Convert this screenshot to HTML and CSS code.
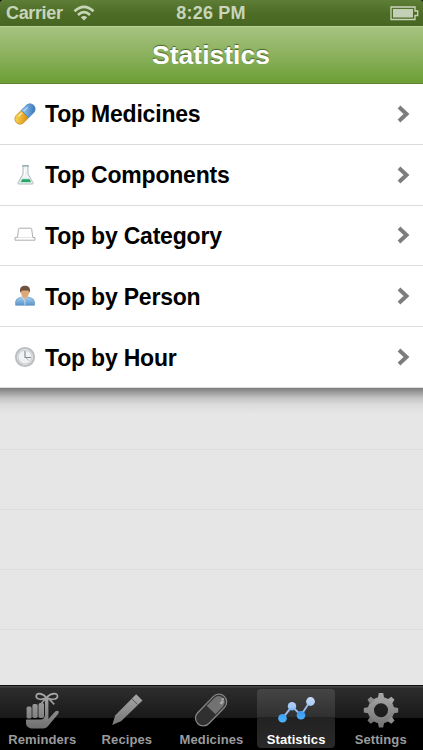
FILE: index.html
```html
<!DOCTYPE html>
<html lang="en">
<head>
<meta charset="utf-8">
<title>Statistics</title>
<link rel="stylesheet" href="styles.css">
</head>
<body>
<div class="app">
  <header class="status">
    <div class="carrier"><span>Carrier</span>
      <svg class="wifi" width="22" height="16" viewBox="0 0 22 16" fill="none" stroke="#c9d5bb" stroke-width="2.7"><path d="M1.5 6.2Q11-2.4 20.5 6.2M5 9.9Q11 4.4 17 9.9"/><path d="M7.8 12.3Q11 9.6 14.2 12.3L11 15.4Z" fill="#c9d5bb" stroke="none"/></svg>
    </div>
    <div class="time">8:26 PM</div>
    <svg class="battery" width="29" height="15" viewBox="0 0 29 15"><path d="M1 1h24v4h2.7v4.5H25v4H1z" fill="none" stroke="#c9d5bb" stroke-width="1.3"/><rect x="3" y="3" width="20" height="8.5" fill="#c3d0b5"/></svg>
  </header>
  <div class="nav"><h1>Statistics</h1></div>
  <main class="content">
    <ul class="list">
      <li class="row">
        <svg class="icon" viewBox="0 0 22 22"><defs><linearGradient id="blue" x2="1" y2="1"><stop stop-color="#9bc9f3"/><stop offset="1" stop-color="#286bb3"/></linearGradient><linearGradient id="gold" x2="1" y2="1"><stop stop-color="#ffe05a"/><stop offset="1" stop-color="#d88b10"/></linearGradient></defs><g transform="rotate(-45 11 11)"><path d="M11 5.8H4a5.2 5.2 0 0 0 0 10.4h7z" fill="url(#gold)" stroke="#c38b2a" stroke-width=".7"/><path d="M11 5.8h7a5.2 5.2 0 0 1 0 10.4h-7z" fill="url(#blue)" stroke="#4880b8" stroke-width=".7"/><path d="M4.5 8.1h5.5" stroke="#fff2a0" stroke-width="1.3"/><path d="M12 8.1h5.5" stroke="#b8dbf8" stroke-width="1.3"/></g></svg>
        <span class="label">Top Medicines</span><svg class="chevron" viewBox="0 0 13 18"><path d="M2 2l7.5 7L2 16"/></svg></li>
      <li class="row">
        <svg class="icon" viewBox="0 0 22 22"><path d="M9 2v8L4 18.7q-.6 1.3.8 1.3h13.4q1.4 0 .8-1.3L14 10V2z" fill="#f0f4f5" stroke="#a5b3ba" stroke-width=".9"/><path d="M8 1.8h7" stroke="#8599a3"/><path d="M7.5 14.5h8l2.5 4.3H5z" fill="#bfe7d2"/><path d="M8.2 15.3h7.4l1.3 2.6H7.1z" fill="#2ca36b"/><path d="M10.5 5v6" stroke="#fff"/></svg>
        <span class="label">Top Components</span><svg class="chevron" viewBox="0 0 13 18"><path d="M2 2l7.5 7L2 16"/></svg></li>
      <li class="row">
        <svg class="icon" viewBox="0 0 22 22"><path d="M4.6 5.2q0-1 1-1h11q1 0 1.1 1l1.1 8.3h2.2v2.7H1v-2.7h2.4z" fill="#fff" stroke="#a4a4a4" stroke-width=".9"/><path d="M3.5 13.5h15" stroke="#ddd" stroke-width=".7"/></svg>
        <span class="label">Top by Category</span><svg class="chevron" viewBox="0 0 13 18"><path d="M2 2l7.5 7L2 16"/></svg></li>
      <li class="row">
        <svg class="icon" viewBox="0 0 22 22"><defs><linearGradient id="shirt" x2="0" y2="1"><stop stop-color="#a8d0f1"/><stop offset="1" stop-color="#5794c9"/></linearGradient></defs><path d="M1.6 20.3v-3.5q.3-3 3.2-3.8L8 11.9h6l3.3 1.1q2.9.8 3.2 3.8v3.5z" fill="url(#shirt)" stroke="#6c9ac2" stroke-width=".7"/><path d="M8.3 11l2.7 4.2 2.7-4.2z" fill="#e8b782"/><path d="M7.5 12l3.3 3.6.2 4.5" fill="none" stroke="#d6eaf9" stroke-width=".8"/><ellipse cx="11" cy="7" rx="4.2" ry="5.2" fill="#dca878"/><path d="M6.3 7.8C5.2 2.8 7.2.7 11 .7s5.8 2.1 4.7 7.1L14.3 5.5H8z" fill="#70513b"/></svg>
        <span class="label">Top by Person</span><svg class="chevron" viewBox="0 0 13 18"><path d="M2 2l7.5 7L2 16"/></svg></li>
      <li class="row">
        <svg class="icon" viewBox="0 0 22 22"><circle cx="11" cy="11" r="9" fill="#f0f2f3" stroke="#bcbebf" stroke-width="2.2"/><circle cx="11" cy="11" r="6.9" fill="none" stroke="#ced2d4" stroke-width="1.2"/><path d="M11 5v6.5h6" fill="none" stroke="#7e868a" stroke-width="1.1"/><path d="M11 11l3.8 3.5" stroke="#a0a4a6" stroke-width=".8"/></svg>
        <span class="label">Top by Hour</span><svg class="chevron" viewBox="0 0 13 18"><path d="M2 2l7.5 7L2 16"/></svg></li>
    </ul>
    <div class="empty"><i></i><i></i><i></i><i></i></div>
  </main>
  <nav class="tabs">
    <svg class="defs" width="0" height="0"><defs><linearGradient id="metal" gradientUnits="userSpaceOnUse" x1="0" y1="0" x2="0" y2="40"><stop stop-color="#aaa"/><stop offset="1" stop-color="#6a6a6a"/></linearGradient><linearGradient id="glow" gradientUnits="userSpaceOnUse" x1="0" y1="2" x2="0" y2="30"><stop stop-color="#d6e1fb"/><stop offset=".5" stop-color="#9bc5f4"/><stop offset=".65" stop-color="#3b9cf0"/><stop offset="1" stop-color="#4db4ff"/></linearGradient></defs></svg>
    <a class="tab"><svg viewBox="0 0 40 40"><g fill="url(#metal)"><rect x="4.6" y="14.5" width="5" height="12" rx="1.6"/><rect x="10.4" y="12" width="5.3" height="14" rx="1.7"/><rect x="16.5" y="11" width="5.5" height="15" rx="1.7"/><path d="M23 6h3.4v21l6.8-7.4q2.2-1.8 3.5-.1.4 1-.6 2.4L25.7 34.5q-1.6 1.9-4.5 1.9H9Q4.6 35.8 4 31.5v-4h14.5q3.8-.2 4.5-4z"/></g><g fill="none" stroke="url(#metal)" stroke-width="1.7"><path d="M24.5 5.5C19 .2 14 1 14.2 4.3S20 8.4 24.5 5.5C30 .2 35.8 1 35.5 4.3S29 8.4 24.5 5.5M24 6l-5.5 6.5M26 6l6.3 6.4"/></g></svg><span>Reminders</span></a>
    <a class="tab"><svg viewBox="0 0 40 40"><path d="M29.2 2.3l6.3 6.1L14 29.2 5.2 33l3.1-9.8z" fill="url(#metal)"/><path d="M24.7 6.8l6 5.7" stroke="#555" stroke-width="1"/></svg><span>Recipes</span></a>
    <a class="tab"><svg viewBox="0 0 40 40"><g transform="rotate(-46 20 18)"><rect x="1" y="10.3" width="38" height="15.6" rx="7.8" fill="#303030" stroke="#858585" stroke-width="1.3"/><path d="M20 12h11a6 6 0 0 1 0 12.2H20z" fill="#727272"/><path d="M31 20.5h3.5q1.3-.5 1.5-2.5" fill="none" stroke="#aaa" stroke-width="2.6" stroke-dasharray="3.6 1"/></g></svg><span>Medicines</span></a>
    <a class="tab active"><svg viewBox="0 0 40 40"><path d="M6.5 26.3L16 14.3l9 9 9-13.8" fill="none" stroke="#99bde8" stroke-width="1.9"/><g fill="url(#glow)"><circle cx="6.5" cy="26.3" r="4.3"/><circle cx="16" cy="14.3" r="4.2"/><circle cx="25" cy="23.3" r="4.3"/><circle cx="34.5" cy="9.5" r="4.4"/></g></svg><span>Statistics</span></a>
    <a class="tab"><svg viewBox="0 0 40 40"><g fill="url(#metal)"><path fill-rule="evenodd" d="M20 5a13.2 13.2 0 1 1 0 26.4A13.2 13.2 0 0 1 20 5zm0 6.2a7 7 0 1 0 0 14 7 7 0 0 0 0-14z"/><path d="M16.8 6.5l1-5.5h4.4l1 5.5zM16.8 29.9l1 5.5h4.4l1-5.5zM8.3 15l-5.5 1v4.4l5.5 1zM31.7 15l5.5 1v4.4l-5.5 1z"/><path transform="rotate(45 20 18.2)" d="M16.8 6.5l1-5.2h4.4l1 5.2zM16.8 29.9l1 5.2h4.4l1-5.2zM8.3 15l-5.2 1v4.4l5.2 1zM31.7 15l5.2 1v4.4l-5.2 1z"/></g></svg><span>Settings</span></a>
  </nav>
</div>
</body>
</html>
```

FILE: styles.css
```css
* { box-sizing: border-box; }
body { margin: 0; background: #000; font-family: "Liberation Sans", Arial, sans-serif; font-weight: bold; }
.app { width: 423px; height: 750px; display: flex; flex-direction: column; overflow: hidden; }
.status { height: 26px; flex: none; display: grid; grid-template-columns: 1fr auto 1fr; align-items: center; padding: 0 4px 0 6px; background: linear-gradient(#5e7e37, #4c6c25 55%, #476622); border-radius: 3px 3px 0 0; color: #c9d5bb; font-size: 18px; line-height: 26px; }
.carrier { display: flex; align-items: center; gap: 10px; letter-spacing: -0.35px; }
.time { margin-right: 3px; padding-top: 1px; line-height: 25px; letter-spacing: 0.2px; }
.battery { justify-self: end; }
.nav { height: 58px; flex: none; display: flex; justify-content: center; background: linear-gradient(#a6c37f, #8bb15e 50%, #6c9f35); border-top: 1px solid #b8cf99; border-bottom: 1px solid #5c8231; }
.nav h1 { margin: 0 1px 0 0; color: #fff; font-size: 26.5px; line-height: 56px; text-shadow: 0 -1px 1px #46612b; }
.content { flex: 1; background: #e6e6e6; }
.list { list-style: none; margin: 0; padding: 0; height: 304px; display: grid; grid-template-rows: repeat(5, 1fr); background: #fff; }
.row { display: flex; align-items: center; padding: 0 13px 0 14px; border-bottom: 1px solid #dcdcde; }
.icon { width: 22px; height: 22px; margin-right: 9px; }
.label { flex: 1; color: #000; font-size: 23px; line-height: 28px; padding-top: 1px; letter-spacing: -0.2px; }
.chevron { width: 13px; height: 18px; fill: none; stroke: #7d7d7d; stroke-width: 4; }
.empty { padding-top: 2px; background: linear-gradient(#7d7d7d, #a0a0a0 5px, #c4c4c4 10px, #dcdcdc 17px, #e6e6e6 26px); }
.empty i { display: block; height: 60px; border-bottom: 1px solid #dedede; }
.tabs { height: 65px; flex: none; display: grid; grid-template-columns: repeat(5, 1fr); background: linear-gradient(#444 0 1px, #2d2d2d 2px, #191919 32px, #000 32px); border-top: 1px solid #111; }
.defs { position: absolute; }
.tab { display: flex; flex-direction: column; align-items: center; margin: 3px 3px 2px; padding-top: 3px; color: #9b9b9b; font-size: 13px; line-height: 16px; border-radius: 4px; }
.tab svg { width: 40px; height: 40px; flex: none; }
.tab span { white-space: nowrap; letter-spacing: 0.1px; }
.active { color: #fff; background: linear-gradient(#454545, #303030 28px, #222 28px, #292929); }
```
